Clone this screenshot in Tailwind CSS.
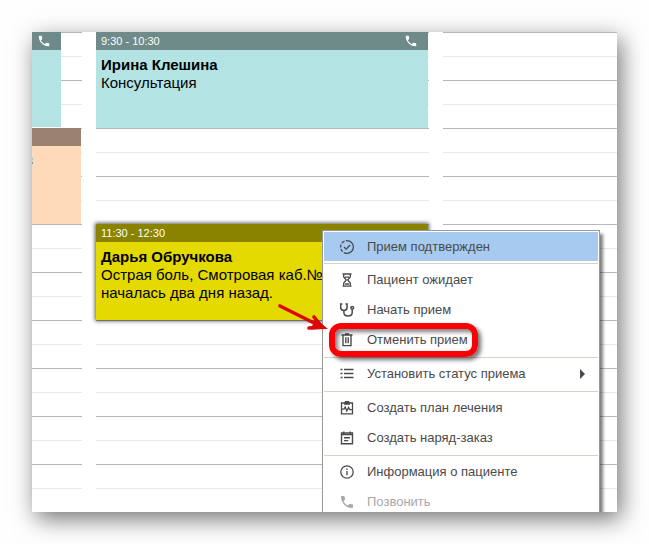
<!DOCTYPE html>
<html lang="ru">
<head>
<meta charset="utf-8">
<title>Расписание приемов</title>
<meta name="viewport" content="width=device-width, initial-scale=1">
<script src="https://cdn.jsdelivr.net/npm/@tailwindcss/browser@4"></script>
</head>
<body class="bg-[#fefefe] font-['Liberation_Sans',Arial,sans-serif] text-black">
<svg class="hidden" aria-hidden="true">
  <symbol id="phone" viewBox="0 0 24 24"><path d="M6.62 10.79c1.44 2.83 3.76 5.14 6.59 6.59l2.2-2.2c.27-.27.67-.36 1.02-.24 1.12.37 2.33.57 3.57.57.55 0 1 .45 1 1V20c0 .55-.45 1-1 1-9.39 0-17-7.61-17-17 0-.55.45-1 1-1h3.5c.55 0 1 .45 1 1 0 1.25.2 2.45.57 3.57.11.35.03.74-.25 1.02l-2.2 2.2z" fill="currentColor"/></symbol>
</svg>
<div class="h-screen overflow-hidden p-8">
<main class="relative grid h-full grid-cols-[50px_333px_minmax(0,1fr)] gap-x-3.5 bg-white shadow-[4px_7px_22px_rgba(0,0,0,0.54)]">

  <section class="grid auto-rows-[24px] content-start overflow-hidden bg-[repeating-linear-gradient(to_bottom,#b8b8b8_0px,#b8b8b8_1px,transparent_1px,transparent_24px,#e9e9e9_24px,#e9e9e9_25px,transparent_25px,transparent_48px)]">
    <article class="row-span-4 mr-[21px] mb-px bg-[#b3e4e3]">
      <header class="flex h-[18px] items-center justify-end bg-[#6e8b8a] pr-2.5 text-white"><svg class="size-3.5"><use href="#phone"/></svg></header>
    </article>
    <article class="row-span-4 mr-px bg-[#ffdaba]">
      <header class="h-[18px] bg-[#9b8270]"></header>
      <div class="mt-3 h-1.5 w-px bg-linear-to-b from-[#6ab7c4] via-[#e8e4a8] to-[#2a78b0]"></div>
    </article>
  </section>

  <section class="grid auto-rows-[24px] content-start bg-[repeating-linear-gradient(to_bottom,#b8b8b8_0px,#b8b8b8_1px,transparent_1px,transparent_24px,#e9e9e9_24px,#e9e9e9_25px,transparent_25px,transparent_48px)]">
    <article class="row-span-4 mr-px bg-[#b3e4e3]">
      <header class="flex h-[18px] items-center justify-between bg-[#6e8b8a] pr-2.5 pl-[5px] text-[11px] text-white"><time>9:30 - 10:30</time><svg class="size-3.5"><use href="#phone"/></svg></header>
      <div class="px-[5px] pt-1.5 text-[15px] leading-[18px]"><h2 class="font-bold">Ирина Клешина</h2><p>Консультация</p></div>
    </article>
    <article class="row-span-4 row-start-9 mr-px bg-[#e5da00] shadow-[0_0_4px_1px_rgba(0,0,0,0.65)]">
      <header class="flex h-[18px] items-center bg-[#8a8300] px-[5px] text-[11px] text-white"><time>11:30 - 12:30</time></header>
      <div class="px-[5px] pt-1.5 text-[15px] leading-[18px]"><h2 class="font-bold">Дарья Обручкова</h2><p>Острая боль, Смотровая каб.№<br>началась два дня назад.</p></div>
    </article>
  </section>

  <section class="bg-[repeating-linear-gradient(to_bottom,#b8b8b8_0px,#b8b8b8_1px,transparent_1px,transparent_24px,#e9e9e9_24px,#e9e9e9_25px,transparent_25px,transparent_48px)]"></section>

  <div class="pointer-events-none absolute inset-0 overflow-hidden">
    <nav class="pointer-events-auto absolute top-[198px] left-[290px] w-[278px] border border-[#999] bg-white px-px text-[13px] text-[#4a4a4a] shadow-[3px_4px_3px_rgba(0,0,0,0.5)]">
      <button class="flex h-[30px] w-full items-center gap-3 border-t border-white bg-[#a6caf0] px-[15px] text-left"><svg class="size-4" viewBox="0 0 16 16" fill="none" stroke="currentColor" stroke-width="1.3"><path d="M8 1.6a6.4 6.4 0 0 1 0 12.8"/><path d="M8 14.4A6.4 6.4 0 0 1 8 1.6" stroke-dasharray="3.2 1.4"/><path d="m5 8 2.1 2.1L11.2 6"/></svg>Прием подтвержден</button>
      <hr class="mt-0.5 mb-px border-[#d5d2c6]">
      <button class="flex h-[30px] w-full items-center gap-3 px-[15px] text-left"><svg class="size-4" viewBox="0 0 16 16" fill="none" stroke="currentColor" stroke-width="1.3"><path d="M3.5 2h9M3.5 14.2h9M4.7 2v3L7.3 8l-2.6 3v3M11.3 2v3L8.7 8l2.6 3v3M6 5.2h4M6 12h4"/></svg>Пациент ожидает</button>
      <button class="flex h-[30px] w-full items-center gap-3 px-[15px] text-left"><svg class="size-4" viewBox="0 0 16 16" fill="none" stroke="currentColor" stroke-width="1.5"><path d="M3.4 2H1.7v3.2a3.2 3.2 0 0 0 6.4 0V2H6.5M4.9 8.6v1.9c0 4.7 8.3 4.7 8.3 0V7.2"/><circle cx="13.2" cy="5.8" r="1.4"/></svg>Начать прием</button>
      <button class="flex h-[30px] w-full items-center gap-3 px-[15px] text-left"><svg class="size-4" viewBox="0 0 16 16" fill="none" stroke="currentColor" stroke-width="1.4"><path d="M2.5 3h11M6 2h4M4 3v10.6h8V3M6.8 5.3v6M9.2 5.3v6"/></svg>Отменить прием</button>
      <hr class="mt-0.5 mb-px border-[#d5d2c6]">
      <button class="flex h-[30px] w-full items-center gap-3 px-[15px] text-left"><svg class="size-4" viewBox="0 0 16 16" fill="none" stroke="currentColor" stroke-width="1.5"><path d="M1.5 3.5h2M5 3.5h9.5M1.5 7.5h2M5 7.5h9.5M1.5 11.5h2M5 11.5h9.5"/></svg><span class="flex-1">Установить статус приема</span><svg class="-mr-4 h-2.5 w-5" viewBox="0 0 20 10"><path d="M1 0l5 5-5 5z" fill="currentColor"/></svg></button>
      <hr class="mt-0.5 mb-px border-[#d5d2c6]">
      <button class="flex h-[30px] w-full items-center gap-3 px-[15px] text-left"><svg class="size-4" viewBox="0 0 16 16" fill="none" stroke="currentColor" stroke-width="1.3"><path d="M2.5 3h11v10.8h-11zM5.7 3 6.5 1.6h3l.8 1.4v1.2H5.700zM3 9.200h2l1.200-2.200 1.600 4L9.600 7.400l1.200 2.200H13"/></svg>Создать план лечения</button>
      <button class="flex h-[30px] w-full items-center gap-3 px-[15px] text-left"><svg class="size-4" viewBox="0 0 16 16" fill="none" stroke="currentColor" stroke-width="1.4"><path d="M2.5 3h11v10.800h-11zM2.500 4.600h11M4.800 1.400V4M11.200 1.400V4M5 7.800h6M5 10.600h4.200"/></svg>Создать наряд-заказ</button>
      <hr class="mt-0.5 mb-px border-[#d5d2c6]">
      <button class="flex h-[30px] w-full items-center gap-3 px-[15px] text-left"><svg class="size-4" viewBox="0 0 16 16" fill="none" stroke="currentColor" stroke-width="1.3"><circle cx="8" cy="8" r="6.2"/><path d="M8 7v4.3M8 4.6v1.5"/></svg>Информация о пациенте</button>
      <button disabled class="flex h-[30px] w-full items-center gap-3 px-[15px] text-left text-[#a8a8a8]"><svg class="size-4"><use href="#phone"/></svg>Позвонить</button>
    </nav>
    <div class="absolute top-[291px] left-[297px] h-[34px] w-[149px] rounded-[12px] border-6 border-[#fb0007] shadow-[3px_3px_4px_rgba(0,0,0,0.55),inset_3px_3px_4px_rgba(0,0,0,0.5)]"></div>
    <svg class="absolute top-[268px] left-[242px] h-8 w-14" viewBox="0 0 56 32" fill="none" stroke="#dc0808" stroke-width="3.6" stroke-linecap="round"><path d="M6 6l40 20M40 17l8 10-13 1"/><path d="M41 18l13 11-17 .5z" fill="#dc0808" stroke="none"/></svg>
  </div>
</main>
</div>
</body>
</html>
